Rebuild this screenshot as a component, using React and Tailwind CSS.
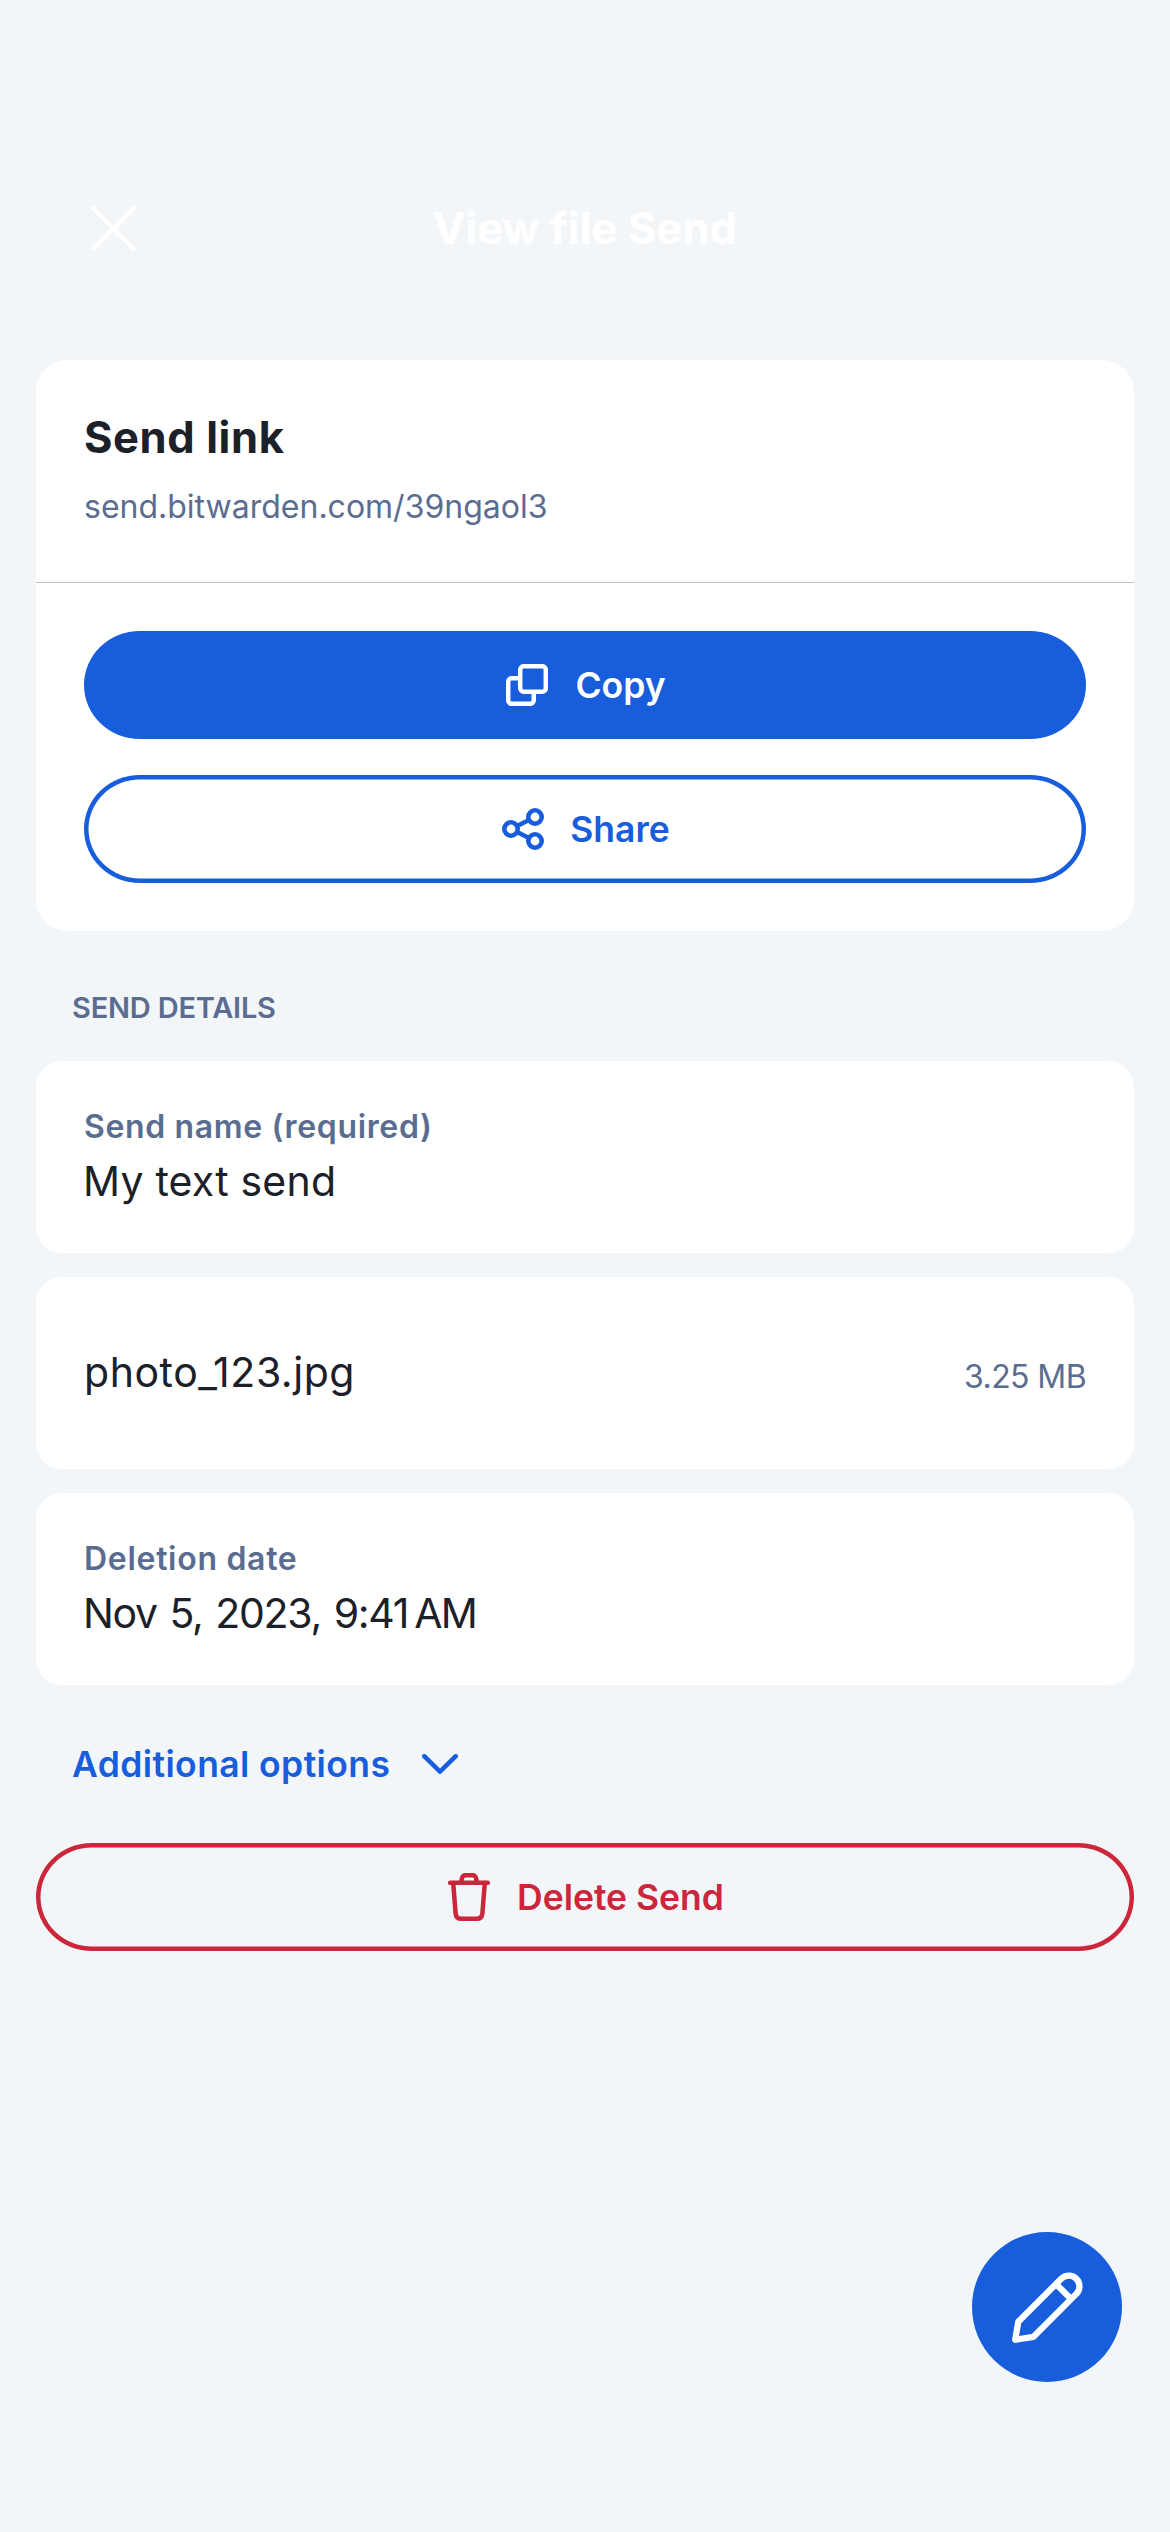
function CloseIcon() {
  return (
    <svg className="h-[45px] w-[45px]" viewBox="0 0 45 45" fill="none" stroke="currentColor" strokeWidth="4.4" strokeLinecap="round">
      <path d="M2.4 2.4 42.6 42.6M42.6 2.4 2.4 42.6" />
    </svg>
  );
}

function CopyIcon() {
  return (
    <svg className="h-[42px] w-[42px]" viewBox="0 0 42 42" fill="none" stroke="currentColor" strokeWidth="4.5">
      <rect x="14.2" y="2.2" width="25.6" height="25.6" rx="3.6" />
      <path d="M14 14.2H5.8a3.6 3.6 0 0 0-3.6 3.6v18.4a3.6 3.6 0 0 0 3.6 3.6h18.4a3.6 3.6 0 0 0 3.6-3.6V28" />
    </svg>
  );
}

function ShareIcon() {
  return (
    <svg className="h-[42px] w-[42px]" viewBox="0 0 42 42" fill="none" stroke="currentColor" strokeWidth="4.6">
      <circle cx="9" cy="21" r="6.7" />
      <circle cx="33" cy="9" r="6.7" />
      <circle cx="33" cy="33" r="6.7" />
      <path d="M15 18 27 12M15 24l12 6" />
    </svg>
  );
}

function ChevronDownIcon() {
  return (
    <svg className="h-[20px] w-[36px]" viewBox="0 0 36 20" fill="none" stroke="currentColor" strokeWidth="4.5" strokeLinecap="round" strokeLinejoin="round">
      <path d="M2.2 2.2 18 17.6 33.8 2.2" />
    </svg>
  );
}

function TrashIcon() {
  return (
    <svg className="h-[48px] w-[42px]" viewBox="0 0 42 48" fill="none" stroke="currentColor" strokeWidth="4.5" strokeLinecap="round" strokeLinejoin="round">
      <path d="M2.2 9.8h37.6" />
      <path d="M13 9.4l.9-4Q14.7 2.2 17.4 2.2h7.2q2.7 0 3.5 3.2l.9 4" />
      <path d="M5.2 10 7.6 40.2q.5 5.6 5.8 5.6h15.2q5.3 0 5.8-5.6L36.8 10" />
    </svg>
  );
}

function PencilIcon() {
  return (
    <svg className="h-[71px] w-[71px]" viewBox="0 0 71 71" fill="none" stroke="currentColor" strokeWidth="6.3" strokeLinejoin="round">
      <path d="M3.2 67.8 6.3 49.7 49.7 6.3a10.7 10.7 0 0 1 15.1 15.1L21.5 64.8Z" />
      <path d="M44 12 59.1 27.1" />
    </svg>
  );
}

function Card({ className = "", children }) {
  return <div className={`h-[192px] rounded-[26px] bg-white px-12 ${className}`}>{children}</div>;
}

function Field({ label, children }) {
  return (
    <Card className="pt-[41px]">
      {label}
      <div className="text-[41px] leading-[60px]">{children}</div>
    </Card>
  );
}

const pill = "flex h-[108px] w-full items-center justify-center rounded-[56px/54px] pl-[2px] text-[35.5px] leading-[54px] font-semibold";

export default function App() {
  return (
    <div className="flex h-[2532px] w-[1170px] flex-col overflow-hidden bg-[#f3f6f9] px-9 font-['Inter','DM_Sans',sans-serif] text-[#1b2029] whitespace-nowrap">
      <header className="grid h-[360px] grid-cols-[1fr_auto_1fr] items-center pt-[95px] text-white">
        <button className="ml-[55px] mt-[2px] h-[45px] w-[45px]"><CloseIcon /></button>
        <h1 className="text-[43.5px] leading-[60px] font-bold tracking-[0.1px]">View file Send</h1>
      </header>

      <section className="h-[571px] rounded-[32px] bg-white">
        <div className="h-[223px] border-b border-[#c0c0c2] px-12 pt-[47px]">
          <h2 className="text-[43.5px] leading-[60px] font-bold tracking-[0.6px]">Send link</h2>
          <p className="mt-[16px] text-[32px] leading-[48px] text-[#5a6d91]">send.bitwarden.com/39ngaol3</p>
        </div>
        <div className="flex flex-col gap-9 px-12 pt-12">
          <button className={`${pill} gap-[27px] bg-[#175ddc] text-white`}>
            <CopyIcon />
            <span className="pt-[2px]">Copy</span>
          </button>
          <button className={`${pill} gap-[26px] text-[#175ddc] shadow-[inset_0_0_0_4.5px_#175ddc]`}>
            <ShareIcon />
            <span className="pt-[2px]">Share</span>
          </button>
        </div>
      </section>

      <h3 className="mt-[56px] mb-[32px] ml-[36px] text-[29px] leading-[42px] font-semibold tracking-[-0.2px] text-[#5a6d91]">SEND DETAILS</h3>

      <div className="flex flex-col gap-6">
        <Field label={<div className="text-[32px] leading-[49px] font-semibold tracking-[0.65px] text-[#5a6d91]">Send name (required)</div>}>
          <span className="-ml-[1px] tracking-[0.2px]">My text send</span>
        </Field>
        <Card className="flex items-center justify-between">
          <span className="-mt-[2px] text-[41px] leading-[60px] tracking-[0.55px]">photo_123.jpg</span>
          <span className="mt-[8px] text-[32px] leading-[48px] tracking-[-0.6px] text-[#5a6d91]">3.25 MB</span>
        </Card>
        <Field label={<div className="text-[32px] leading-[49px] font-semibold tracking-[0.7px] text-[#5a6d91]">Deletion date</div>}>
          <span className="-ml-[1px] tracking-[-1.3px] [word-spacing:2.5px]">Nov 5, 2023, 9:41<span className="-ml-[6px] tracking-[-1.8px]"> AM</span></span>
        </Field>
      </div>

      <button className="ml-9 flex h-[158px] items-center gap-[32px] self-start text-[35.5px] leading-[54px] font-semibold text-[#175ddc]">
        <span className="pt-[2px] tracking-[0.4px]">Additional options</span>
        <ChevronDownIcon />
      </button>

      <button className={`${pill} shrink-0 gap-[27px] text-[#cb263a] shadow-[inset_0_0_0_4.5px_#cb263a]`}>
        <TrashIcon />
        <span className="pt-[2px]">Delete Send</span>
      </button>

      <button className="mt-[281px] mr-3 flex h-[150px] w-[150px] shrink-0 items-center justify-center self-end rounded-full bg-[#175ddc] text-white">
        <PencilIcon />
      </button>
    </div>
  );
}
